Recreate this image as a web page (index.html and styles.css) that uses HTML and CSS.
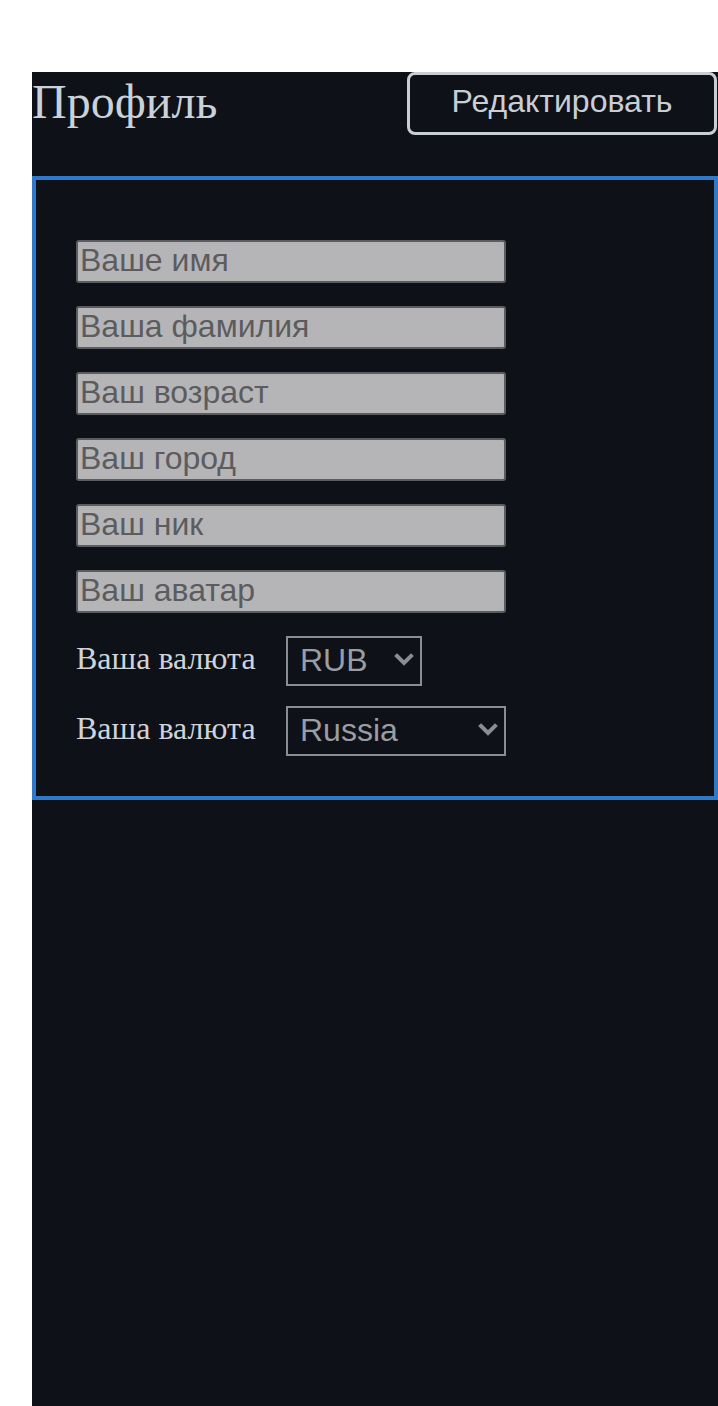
FILE: index.html
```html
<!DOCTYPE html>
<html lang="ru">
<head>
<meta charset="utf-8">
<title>Профиль</title>
<link rel="stylesheet" href="styles.css">
</head>
<body>
<div class="panel">
  <header class="head">
    <h1 class="title">Профиль</h1>
    <button class="edit-btn" type="button">Редактировать</button>
  </header>
  <section class="box">
    <form class="form">
      <input class="field" type="text" placeholder="Ваше имя">
      <input class="field" type="text" placeholder="Ваша фамилия">
      <input class="field" type="text" placeholder="Ваш возраст">
      <input class="field" type="text" placeholder="Ваш город">
      <input class="field" type="text" placeholder="Ваш ник">
      <input class="field" type="text" placeholder="Ваш аватар">
      <div class="row row-first">
        <label class="lbl">Ваша валюта</label>
        <span class="sel-wrap">
          <select class="sel sel-small">
            <option>RUB</option>
            <option>USD</option>
          </select>
          <svg class="chev" width="20" height="14" viewBox="0 0 20 14"><path d="M3 3 L10 10 L17 3" fill="none" stroke="#8a8d92" stroke-width="4" stroke-linecap="square"/></svg>
        </span>
      </div>
      <div class="row row-second">
        <label class="lbl">Ваша валюта</label>
        <span class="sel-wrap">
          <select class="sel sel-wide">
            <option>Russia</option>
            <option>USA</option>
          </select>
          <svg class="chev" width="20" height="14" viewBox="0 0 20 14"><path d="M3 3 L10 10 L17 3" fill="none" stroke="#8a8d92" stroke-width="4" stroke-linecap="square"/></svg>
        </span>
      </div>
    </form>
  </section>
</div>
</body>
</html>
```
FILE: styles.css
```css
html, body {
  margin: 0;
  padding: 0;
  background: #ffffff;
}

body {
  font-family: "Liberation Serif", serif;
}

.panel {
  margin: 72px 0 0 32px;
  width: 686px;
  min-height: 1334px;
  background: #0e1118;
  color: #c9d1d9;
}

.head {
  display: flex;
  justify-content: space-between;
  align-items: flex-start;
  height: 63px;
  margin-bottom: 41px;
}

.title {
  margin: 0;
  padding-top: 2px;
  font-family: "Liberation Serif", serif;
  font-weight: normal;
  font-size: 48px;
  line-height: 55px;
  color: #c9d1d9;
}

.edit-btn {
  width: 310px;
  height: 63px;
  margin-right: 1px;
  background: transparent;
  border: 3px solid #c9ced6;
  border-radius: 8px;
  color: #c9ced6;
  font-family: "Liberation Sans", sans-serif;
  font-size: 32px;
  padding: 0 0 4px;
  cursor: pointer;
}

.box {
  border: 4px solid #3079c9;
  padding: 60px 40px 40px;
}

.form {
  display: flex;
  flex-direction: column;
  align-items: flex-start;
}

.field {
  box-sizing: border-box;
  width: 430px;
  height: 43px;
  margin: 0 0 23px;
  padding: 0 2px 2px;
  background: #b5b5b7;
  border: 2px solid #5b5c5f;
  border-radius: 3px;
  font-family: "Liberation Sans", sans-serif;
  font-size: 32px;
  color: #333;
  outline: none;
}

.field::placeholder {
  color: #5c5c5e;
}

.row {
  display: flex;
  align-items: center;
}

.row-second {
  margin-top: 20px;
}

.lbl {
  width: 210px;
  font-family: "Liberation Serif", serif;
  font-size: 32px;
  color: #d0d4da;
  padding-bottom: 5px;
}

.sel-wrap {
  position: relative;
  display: inline-flex;
}

.sel {
  box-sizing: border-box;
  height: 50px;
  padding: 0 30px 2px 12px;
  appearance: none;
  -webkit-appearance: none;
  background-color: transparent;
  border: 2px solid #8a8d92;
  border-radius: 0;
  color: #9a9da2;
  font-family: "Liberation Sans", sans-serif;
  font-size: 32px;
  outline: none;
}

.chev {
  position: absolute;
  right: 8px;
  top: 17px;
  pointer-events: none;
}

.sel-small {
  width: 136px;
}

.sel-wide {
  width: 220px;
}
```
